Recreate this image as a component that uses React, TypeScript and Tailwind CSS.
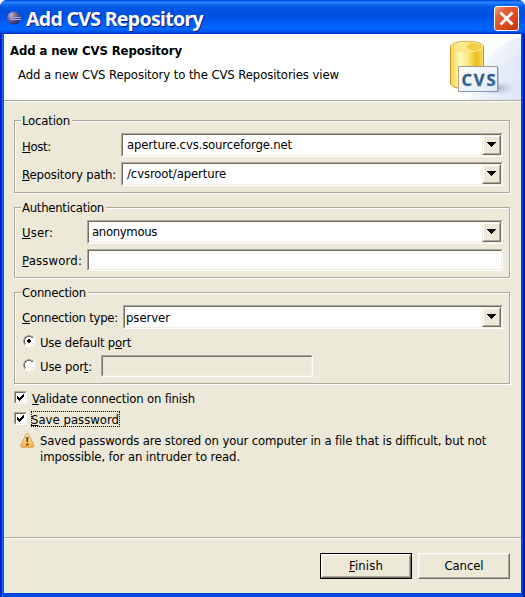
import { useLayoutEffect, useRef, type ReactNode } from "react";

/** Single line of text, tracked to a set advance width. "&" marks the mnemonic letter. */
function Label({
  text,
  width,
  className = "",
  leading = "-mb-[2px] leading-[18px]",
}: {
  text: string;
  width: number;
  className?: string;
  leading?: string;
}) {
  const ref = useRef<HTMLSpanElement>(null);
  const at = text.indexOf("&");
  const length = at < 0 ? text.length : text.length - 1;
  useLayoutEffect(() => {
    const el = ref.current;
    if (!el) return;
    el.style.letterSpacing = "0px";
    const natural = el.getBoundingClientRect().width;
    el.style.letterSpacing = `${(width - natural) / length}px`;
  }, [width, length]);
  return (
    <span ref={ref} className={`inline-block shrink-0 self-start whitespace-nowrap ${leading} ${className}`}>
      {at < 0 ? (
        text
      ) : (
        <>
          {text.slice(0, at)}
          <span className="underline decoration-1 underline-offset-1">{text[at + 1]}</span>
          {text.slice(at + 2)}
        </>
      )}
    </span>
  );
}

function Group({ title, width, className, children }: { title: string; width: number; className: string; children: ReactNode }) {
  return (
    <section
      className={`ml-[10px] flex w-[496px] flex-col border border-[#aca899] shadow-[1px_1px_0_#fff,inset_1px_1px_0_#fff] ${className}`}
    >
      <h2 className="-mt-[9px] mb-[5px] ml-[6px] flex h-4 self-start bg-[#ece9d8] pr-[2px] pl-px">
        <Label text={title} width={width} />
      </h2>
      <div className="flex flex-col gap-[5px] pr-[6px] pl-[7px]">{children}</div>
    </section>
  );
}

function Sunken({ className, inner = "bg-white", children }: { className: string; inner?: string; children?: ReactNode }) {
  return (
    <div className={`border border-t-[#aca899] border-r-white border-b-white border-l-[#aca899] ${className}`}>
      <div
        className={`flex h-full w-full border border-t-[#716f64] border-r-[#f1efe2] border-b-[#f1efe2] border-l-[#716f64] ${inner}`}
      >
        {children}
      </div>
    </div>
  );
}

function Combo({ value, width, className, pad }: { value: string; width: number; className: string; pad: string }) {
  return (
    <Sunken className={`h-6 ${className}`}>
      <div className={`flex flex-1 ${pad}`}>
        <Label text={value} width={width} />
      </div>
      <button className="h-5 w-[19px] border border-t-[#f1efe2] border-r-[#716f64] border-b-[#716f64] border-l-[#f1efe2] bg-[#ece9d8]">
        <span className="flex h-full w-full justify-center border border-t-white border-r-[#aca899] border-b-[#aca899] border-l-white pt-[5px]">
          <svg width="9" height="5" viewBox="0 0 9 5" shapeRendering="crispEdges">
            <path d="M0 0h9v1H0zM1 1h7v1H1zM2 2h5v1H2zM3 3h3v1H3zM4 4h1v1H4z" />
          </svg>
        </span>
      </button>
    </Sunken>
  );
}

function Radio({ checked = false }: { checked?: boolean }) {
  return (
    <svg width="12" height="12" viewBox="0 0 12 12" shapeRendering="crispEdges">
      <path fill="#fff" d="M4 1h4v1h2v2h1v4h-1v2H8v1H4v-1H2V8H1V4h1V2h2z" />
      <path fill="#aca899" d="M4 0h4v1H4zM2 1h2v1H2zM8 1h2v1H8zM1 2h1v2H1zM0 4h1v4H0zM1 8h1v2H1z" />
      <path fill="#716f64" d="M4 1h4v1H4zM2 2h2v1H2zM8 2h2v1H8zM2 3h1v1H2zM1 4h1v4H1zM2 8h1v1H2z" />
      <path fill="#f1efe2" d="M9 3h1v1H9zM10 4h1v4h-1zM9 8h1v1H9zM8 9h2v1H8zM2 9h2v1H2zM4 10h4v1H4z" />
      <path fill="#fff" d="M10 2h1v2h-1zM11 4h1v4h-1zM10 8h1v2h-1zM8 10h2v1H8zM2 10h2v1H2zM4 11h4v1H4z" />
      {checked && <path d="M5 4h2v1h1v2H7v1H5V7H4V5h1z" />}
    </svg>
  );
}

function Check() {
  return (
    <Sunken className="h-[13px] w-[13px] shrink-0">
      <svg className="mt-px ml-px" width="7" height="7" viewBox="0 0 7 7" shapeRendering="crispEdges">
        <path d="M0 2h1v1h1v1h1V3h1V2h1V1h1V0h1v3H6v1H5v1H4v1H3v1H2V6H1V5H0z" />
      </svg>
    </Sunken>
  );
}

function EclipseLogo() {
  return (
    <svg className="mt-[11px] ml-[7px]" width="15" height="14" viewBox="0 0 15 14">
      <defs>
        <radialGradient id="orb" cx=".3" cy=".25" r=".85">
          <stop offset="0" stopColor="#c9aeb9" />
          <stop offset=".45" stopColor="#70629a" />
          <stop offset="1" stopColor="#20205c" />
        </radialGradient>
      </defs>
      <ellipse cx="7" cy="7" rx="6.8" ry="6.5" fill="url(#orb)" />
      <path d="M3 6.500h11M3 8.500h11" stroke="#aab4e0" strokeWidth=".9" />
    </svg>
  );
}

function CvsBanner() {
  return (
    <svg width="81" height="66" viewBox="0 0 81 66">
      <defs>
        <linearGradient id="sky" x1="0" y1="0" x2="1" y2=".7">
          <stop offset=".1" stopColor="#fff" />
          <stop offset="1" stopColor="#dce5f7" />
        </linearGradient>
        <linearGradient id="arc" x1="0" y1="0" x2="1" y2="0">
          <stop offset="0" stopColor="#e9eef9" stopOpacity=".2" />
          <stop offset="1" stopColor="#dfe7f7" />
        </linearGradient>
        <linearGradient id="gold" x1="0" y1="0" x2="1" y2="0">
          <stop offset="0" stopColor="#f4d448" />
          <stop offset=".3" stopColor="#fffbbd" />
          <stop offset=".55" stopColor="#f9e476" />
          <stop offset=".8" stopColor="#edbd18" />
          <stop offset="1" stopColor="#f8de70" />
        </linearGradient>
        <linearGradient id="card" x1="0" y1="0" x2="1" y2="1">
          <stop offset="0" stopColor="#fff" />
          <stop offset="1" stopColor="#dfeaf6" />
        </linearGradient>
        <linearGradient id="ink" x1="0" y1="0" x2="0" y2="1">
          <stop offset="0" stopColor="#244876" />
          <stop offset="1" stopColor="#3977a8" />
        </linearGradient>
        <radialGradient id="shade">
          <stop offset="0" stopColor="#8e8a9c" stopOpacity=".7" />
          <stop offset="1" stopColor="#b5b9cc" stopOpacity="0" />
        </radialGradient>
      </defs>
      <path fill="url(#sky)" d="M30 66Q40 15 81 2v64z" />
      <path fill="url(#arc)" d="M50 66Q54 30 81 21v45z" />
      <ellipse cx="56" cy="54" rx="20" ry="7" fill="url(#shade)" />
      <path fill="url(#gold)" stroke="#cf9224" d="M10.500 13C10.500 5.500 43.500 5.500 43.500 13v36c0 8-33 8-33 0z" />
      <ellipse cx="27" cy="13" rx="15.500" ry="5" fill="#f3cf45" stroke="#fff2a2" />
      <path d="M13 13q4-5 17-4l-4 4 6 4q-16 1-19-4" fill="#fff0a0" opacity=".8" />
      <rect x="18.500" y="32.500" width="39" height="25" fill="url(#card)" stroke="#a69c8c" />
      <path d="M18.500 57.500V33" stroke="#b9a377" />
      <path d="M19 57.500h39V33" fill="none" stroke="#8297b3" />
      <text
        x="21.500"
        y="52"
        textLength="34"
        lengthAdjust="spacing"
        fontFamily="'Open Sans', sans-serif"
        fontWeight="700"
        fontSize="16.500"
        fill="url(#ink)"
        stroke="url(#ink)"
        strokeWidth=".3"
      >
        CVS
      </text>
    </svg>
  );
}

function Warning() {
  return (
    <svg className="shrink-0" width="15" height="15" viewBox="0 0 15 15">
      <defs>
        <linearGradient id="amber" x1="0" y1="0" x2="0" y2="1">
          <stop offset="0" stopColor="#fff0b8" />
          <stop offset="1" stopColor="#f9b03c" />
        </linearGradient>
      </defs>
      <path
        d="M6 1.200Q7.200 0 8.400 1.200L14 12.500Q14 14 12.800 14.200H1.700Q.4 14 .7 12.500z"
        fill="url(#amber)"
        stroke="#d59a5a"
      />
      <path d="M6.200 4h2.200l-.4 5H6.600zM6.200 10.500h2.200v2H6.200z" fill="#5e3b1c" />
    </svg>
  );
}

export default function App() {
  return (
    <main className="flex h-[597px] w-[525px] flex-col overflow-hidden rounded-t-[7px] bg-[linear-gradient(90deg,#0019cf_0,#0019cf_1px,#0831d9_1px,#0831d9_2px,#166aee_2px,#166aee_3px,#0855dd_3px,#0855dd_4px,#0046e5_4px,#0046e5_523px,#001a9c_523px)] font-['DejaVu_Sans_Condensed','DejaVu_Sans',sans-serif] text-[13px] leading-4 text-black">
      <header className="flex h-[34px] shrink-0 bg-[linear-gradient(180deg,#003fd6_0,#0058ee_1px,#2f8cff_2px,#1670f8_4px,#0058e6_7px,#0050e0_13px,#0055ea_19px,#0062fa_25px,#0066ff_29px,#005cf5_31px,#003dd7_33px,#0030c0_34px)]">
        <EclipseLogo />
        <h1 className="mt-[6px] ml-1 flex flex-1 font-['Noto_Sans',sans-serif] text-[19.5px] font-bold text-white [text-shadow:1px_1px_0_#0a1883]">
          <Label text="Add CVS Repository" width={177} leading="leading-[26px]" />
        </h1>
        <button className="mt-[6px] mr-[6px] flex h-[25px] w-[25px] items-center justify-center rounded-[3px] border border-white bg-[linear-gradient(135deg,#f0a088_0,#e65c38_30%,#dc4519_70%,#b83210_100%)]">
          <svg width="15" height="15" viewBox="0 0 15 15">
            <path d="M1.500 1.500l12 12M13.500 1.500l-12 12" stroke="#fff" strokeWidth="2.800" />
          </svg>
        </button>
      </header>
      <div className="mr-1 mb-1 ml-1 flex flex-1 flex-col bg-[#ece9d8]">
        <div className="flex h-[68px] shrink-0 border-b border-white bg-white">
          <div className="flex w-full border-b border-[#aca899]">
            <div className="flex w-[436px] flex-col pt-2 pl-[6px]">
              <Label text="Add a new CVS Repository" width={172} className="font-bold" />
              <Label text="Add a new CVS Repository to the CVS Repositories view" width={321} className="mt-2 ml-2" />
            </div>
            <CvsBanner />
          </div>
        </div>

        <Group title="Location" width={48} className="mt-[18px] h-[73px]">
          <div className="flex">
            <div className="w-[99px] pt-[5px]">
              <Label text="&Host:" width={29} />
            </div>
            <Combo value="aperture.cvs.sourceforge.net" width={165} className="flex-1" pad="pt-px pl-1" />
          </div>
          <div className="flex">
            <div className="w-[99px] pt-1">
              <Label text="&Repository path:" width={94} />
            </div>
            <Combo value="/cvsroot/aperture" width={99} className="flex-1" pad="pt-px pl-1" />
          </div>
        </Group>

        <Group title="Authentication" width={82} className="mt-[14px] h-[71px]">
          <div className="flex">
            <div className="w-[65px] pt-1">
              <Label text="&User:" width={31} />
            </div>
            <Combo value="anonymous" width={65} className="flex-1" pad="pt-px pl-[3px]" />
          </div>
          <div className="flex">
            <div className="w-[65px] pt-[3px]">
              <Label text="&Password:" width={60} />
            </div>
            <Sunken className="h-[22px] flex-1" />
          </div>
        </Group>

        <Group title="Connection" width={64} className="mt-[14px] h-[92px]">
          <div className="flex">
            <div className="w-[101px] pt-1">
              <Label text="&Connection type:" width={96} />
            </div>
            <Combo value="pserver" width={44} className="flex-1" pad="pt-[2px] pl-px" />
          </div>
          <div className="flex h-[17px] pl-px">
            <div className="mt-px">
              <Radio checked />
            </div>
            <div className="ml-[5px]">
              <Label text="Use default p&ort" width={91} />
            </div>
          </div>
          <div className="-mt-[1px] flex pl-px">
            <div className="mt-[4px]">
              <Radio />
            </div>
            <div className="mt-[3px] ml-[5px] w-[61px]">
              <Label text="Use por&t:" width={52} />
            </div>
            <Sunken className="h-[22px] w-[212px]" inner="bg-[#ece9d8]" />
          </div>
        </Group>

        <div className="mt-[6px] ml-[10px] flex h-[21px]">
          <div className="mt-px">
            <Check />
          </div>
          <div className="ml-[5px]">
            <Label text="&Validate connection on finish" width={163} />
          </div>
        </div>
        <div className="ml-[10px] flex h-[21px]">
          <div className="mt-px">
            <Check />
          </div>
          <div className="ml-[4px] h-4 w-[89px] outline-1 -outline-offset-1 outline-black outline-dotted">
            <Label text="&Save password" width={88} />
          </div>
        </div>
        <div className="ml-4 flex">
          <div className="mt-px">
            <Warning />
          </div>
          <p className="ml-[5px] flex flex-col">
            <Label text="Saved passwords are stored on your computer in a file that is difficult, but not" width={446} />
            <Label text="impossible, for an intruder to read." width={200} />
          </p>
        </div>

        <footer className="mt-auto flex h-14 shrink-0 justify-end gap-[6px] border-t border-[#aca899] pt-[15px] pr-[11px] shadow-[inset_0_1px_0_#fff]">
          <button className="h-[26px] w-[92px] border border-black">
            <span className="flex h-full w-full border border-t-white border-r-[#716f64] border-b-[#716f64] border-l-white">
              <span className="flex h-full w-full justify-center border border-t-[#f1efe2] border-r-[#aca899] border-b-[#aca899] border-l-[#f1efe2] pt-px">
                <Label text="&Finish" width={34} />
              </span>
            </span>
          </button>
          <button className="h-[26px] w-[92px] border border-t-white border-r-[#716f64] border-b-[#716f64] border-l-white">
            <span className="flex h-full w-full justify-center border border-t-[#f1efe2] border-r-[#aca899] border-b-[#aca899] border-l-[#f1efe2] pt-[2px]">
              <Label text="Cancel" width={39} />
            </span>
          </button>
        </footer>
      </div>
    </main>
  );
}
